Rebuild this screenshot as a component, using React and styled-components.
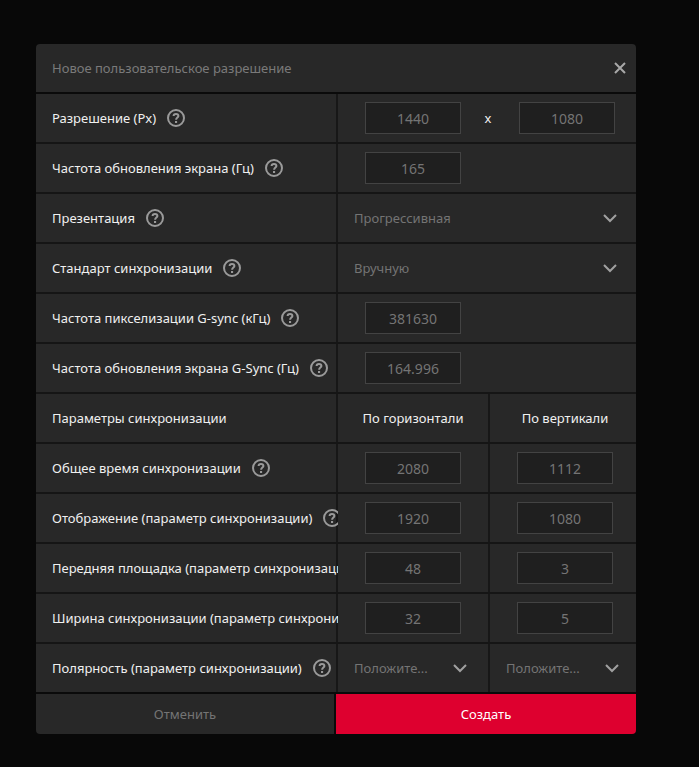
import { useId, useState } from 'react'
import styled, { createGlobalStyle } from 'styled-components'

const GlobalStyle = createGlobalStyle`
    *{
        box-sizing: border-box;
    }
    body{
        margin: 0;
        background: #080808;
        color: #f0f0f0;
        font-family: "Noto Sans", "Open Sans", sans-serif;
        font-size: 13px;
        line-height: 20px;
    }
    button, input, select{
        font: inherit;
    }
`

const Page = styled.main`
    padding: 44px 63px 33px 36px;
`

const Dialog = styled.form`
    border-radius: 4px;
    overflow: hidden;
    background: #0a0a0a;
`

const Header = styled.header`
    display: flex;
    align-items: center;
    justify-content: space-between;
    height: 48px;
    padding: 0 8px 0 16px;
    margin-bottom: 2px;
    background: #282828;
    h1{
        margin: 0;
        font-size: 13px;
        font-weight: 400;
        color: #7a7a7a;
    }
`

const CloseButton = styled.button`
    display: flex;
    padding: 2px;
    border: 0;
    background: none;
    color: #a8a8a8;
    cursor: pointer;
`

const RowStyled = styled.div`
    display: grid;
    grid-template-columns: minmax(0, 302fr) minmax(0, 152fr) minmax(0, 146fr);
    height: 50px;
    border-bottom: 2px solid #151515;
    background: #282828;
    &:last-of-type{
        border-color: #0a0a0a;
    }
`

const LabelCell = styled.div`
    display: flex;
    align-items: center;
    gap: 11px;
    padding-left: 16px;
    overflow: hidden;
    white-space: nowrap;
    box-shadow: inset -2px 0 #171717;
`

const Cell = styled.div`
    display: flex;
    align-items: center;
    justify-content: ${({$align}) => $align || 'flex-start'};
    grid-column: ${({$wide}) => $wide ? 'span 2' : 'auto'};
    padding-left: ${({$inset}) => $inset || 0}px;
    &:nth-child(2):not(:last-child){
        border-right: 2px solid #171717;
    }
`

const NumberInput = styled.input`
    width: 96px;
    height: 32px;
    padding: 0;
    border: 1px solid #434343;
    border-radius: 0;
    outline: 0;
    background: #1f1f1f;
    color: #747474;
    font-size: 14px;
    text-align: center;
`

const Times = styled.span`
    width: 58px;
    padding-right: 4px;
    text-align: center;
`

const HelpButton = styled.button`
    display: flex;
    flex-shrink: 0;
    padding: 0;
    border: 0;
    background: none;
    color: #9a9a9a;
    cursor: pointer;
`

const SelectStyled = styled.div`
    display: grid;
    flex: 1;
    align-items: center;
    select, svg{
        grid-area: 1 / 1;
    }
    select{
        width: 100%;
        height: 48px;
        padding: 0 40px 0 16px;
        border: 0;
        outline: 0;
        appearance: none;
        background: none;
        color: #747474;
    }
    svg{
        justify-self: end;
        margin-right: ${({$edge}) => $edge}px;
        color: #a0a0a0;
        pointer-events: none;
    }
`

const Footer = styled.footer`
    display: grid;
    grid-template-columns: 1fr 1fr;
`

const FooterButton = styled.button`
    height: 40px;
    padding: 0;
    border: 0;
    border-right: ${({$primary}) => $primary ? '0' : '2px solid #0a0a0a'};
    background: ${({$primary}) => $primary ? '#de002f' : '#282828'};
    color: ${({$primary}) => $primary ? '#fff' : '#747474'};
    cursor: pointer;
`

function HelpIcon() {
    return (
        <svg width="18" height="18" viewBox="0 0 18 18" fill="none" stroke="currentColor" strokeWidth="2" aria-hidden="true">
            <circle cx="9" cy="9" r="8" />
            <path d="M6.6 7.1C6.6 5.7 7.6 4.9 9 4.9s2.4.8 2.4 2.1C11.4 8.500 9.100 8.700 9.100 10.700" />
            <path d="M8 12h2.100v2H8z" fill="currentColor" stroke="none" />
        </svg>
    )
}

function Field({id, label, value}) {
    const [current, setCurrent] = useState(value)

    return (
        <NumberInput
            id={id}
            aria-label={label}
            inputMode="decimal"
            value={current}
            onChange={e => setCurrent(e.target.value)}
        />
    )
}

function Select({id, label, value, edge}) {
    return (
        <SelectStyled $edge={edge}>
            <select id={id} aria-label={label} defaultValue={value}>
                <option>{value}</option>
            </select>
            <svg width="14" height="10" viewBox="0 0 14 10" fill="none" stroke="currentColor" strokeWidth="2" aria-hidden="true">
                <path d="M1 2l6 6 6-6" />
            </svg>
        </SelectStyled>
    )
}

function Row({label, help = true, children}) {
    const id = useId()

    return (
        <RowStyled>
            <LabelCell>
                {children ? <label htmlFor={id}>{label}</label> : <span>{label}</span>}
                {help && <HelpButton type="button" aria-label="Справка"><HelpIcon /></HelpButton>}
            </LabelCell>
            {children ? children(id) : (
                <>
                    <Cell $align="center">По горизонтали</Cell>
                    <Cell $align="center" $inset={4}>По вертикали</Cell>
                </>
            )}
        </RowStyled>
    )
}

const timings = [
    {label: 'Общее время синхронизации', horizontal: '2080', vertical: '1112'},
    {label: 'Отображение (параметр синхронизации)', horizontal: '1920', vertical: '1080'},
    {label: 'Передняя площадка (параметр синхронизации)', horizontal: '48', vertical: '3'},
    {label: 'Ширина синхронизации (параметр синхронизации)', horizontal: '32', vertical: '5'},
]

function App() {
    return (
        <>
            <GlobalStyle />
            <Page>
                <Dialog onSubmit={e => e.preventDefault()}>
                    <Header>
                        <h1>Новое пользовательское разрешение</h1>
                        <CloseButton type="button" aria-label="Закрыть">
                            <svg width="12" height="12" viewBox="0 0 12 12" stroke="currentColor" strokeWidth="2" aria-hidden="true">
                                <path d="M1 1l10 10M11 1L1 11" />
                            </svg>
                        </CloseButton>
                    </Header>

                    <Row label="Разрешение (Px)">
                        {id => (
                            <Cell $wide $inset={27}>
                                <Field id={id} value="1440" />
                                <Times>x</Times>
                                <Field label="Разрешение по вертикали" value="1080" />
                            </Cell>
                        )}
                    </Row>
                    <Row label="Частота обновления экрана (Гц)">
                        {id => <Cell $wide $inset={27}><Field id={id} value="165" /></Cell>}
                    </Row>
                    <Row label="Презентация">
                        {id => <Cell $wide><Select id={id} value="Прогрессивная" edge={19} /></Cell>}
                    </Row>
                    <Row label="Стандарт синхронизации">
                        {id => <Cell $wide><Select id={id} value="Вручную" edge={19} /></Cell>}
                    </Row>
                    <Row label="Частота пикселизации G-sync (кГц)">
                        {id => <Cell $wide $inset={27}><Field id={id} value="381630" /></Cell>}
                    </Row>
                    <Row label="Частота обновления экрана G-Sync (Гц)">
                        {id => <Cell $wide $inset={27}><Field id={id} value="164.996" /></Cell>}
                    </Row>

                    <Row label="Параметры синхронизации" help={false} />
                    {timings.map(({label, horizontal, vertical}) => (
                        <Row key={label} label={label}>
                            {id => (
                                <>
                                    <Cell $inset={27}><Field id={id} value={horizontal} /></Cell>
                                    <Cell $inset={27}><Field label={`${label}, по вертикали`} value={vertical} /></Cell>
                                </>
                            )}
                        </Row>
                    ))}
                    <Row label="Полярность (параметр синхронизации)">
                        {id => (
                            <>
                                <Cell><Select id={id} value="Положите..." edge={21} /></Cell>
                                <Cell><Select label="Полярность по вертикали" value="Положите..." edge={17} /></Cell>
                            </>
                        )}
                    </Row>

                    <Footer>
                        <FooterButton type="button">Отменить</FooterButton>
                        <FooterButton type="submit" $primary>Создать</FooterButton>
                    </Footer>
                </Dialog>
            </Page>
        </>
    )
}

export default App
